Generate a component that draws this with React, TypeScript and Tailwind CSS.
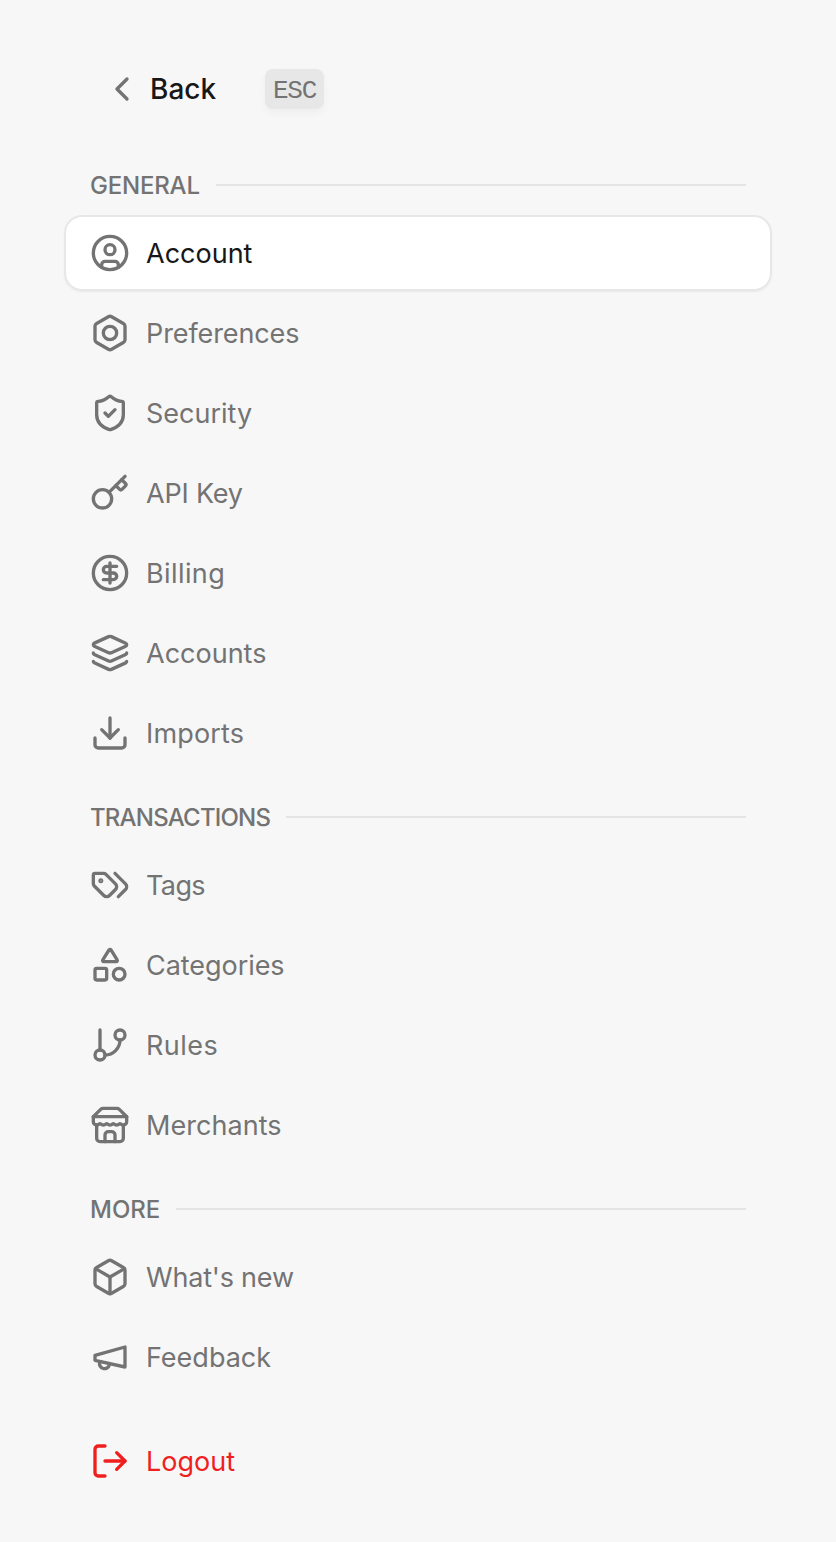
import type { ReactNode } from 'react'
import {
  Bolt,
  Box,
  ChevronLeft,
  CircleDollarSign,
  CircleUser,
  Download,
  GitBranch,
  Key,
  Layers,
  LogOut,
  Shapes,
  ShieldCheck,
} from 'lucide-react'

type NavItem = {
  name: string
  icon: ReactNode
  tracking?: string
  active?: boolean
}

type NavSection = {
  header: string
  tracking?: string
  items: NavItem[]
}

// Outline icons that lucide-react has redrawn or that need their own paths
function OutlineIcon({ children }: { children: ReactNode }) {
  return (
    <svg width="40" height="40" viewBox="0 0 24 24" fill="none" stroke="currentColor" strokeWidth="2" strokeLinecap="round" strokeLinejoin="round">
      {children}
    </svg>
  )
}

function StoreIcon() {
  return (
    <OutlineIcon>
      <path d="m2 7 4.41-4.41A2 2 0 0 1 7.83 2h8.34a2 2 0 0 1 1.42.59L22 7" />
      <path d="M4 12v8a2 2 0 0 0 2 2h12a2 2 0 0 0 2-2v-8" />
      <path d="M15 22v-4a2 2 0 0 0-2-2h-2a2 2 0 0 0-2 2v4" />
      <path d="M2 7h20" />
      <path d="M22 7v3a2 2 0 0 1-2 2a2.7 2.7 0 0 1-1.59-.63.7.7 0 0 0-.82 0A2.7 2.7 0 0 1 16 12a2.7 2.7 0 0 1-1.59-.63.7.7 0 0 0-.82 0A2.7 2.7 0 0 1 12 12a2.7 2.7 0 0 1-1.59-.63.7.7 0 0 0-.82 0A2.7 2.7 0 0 1 8 12a2.7 2.7 0 0 1-1.59-.63.7.7 0 0 0-.82 0A2.7 2.7 0 0 1 4 12a2 2 0 0 1-2-2V7" />
    </OutlineIcon>
  )
}

function MegaphoneIcon() {
  return (
    <OutlineIcon>
      <path d="m3 11 18-5v12L3 14v-3z" />
      <path d="M11.6 16.8a3 3 0 1 1-5.8-1.6" />
    </OutlineIcon>
  )
}

function TagsIcon() {
  return (
    <OutlineIcon>
      <path d="m15 5 6.3 6.3a2.4 2.4 0 0 1 0 3.4L17 19" />
      <path d="M9.586 5.586A2 2 0 0 0 8.172 5H3a1 1 0 0 0-1 1v5.172a2 2 0 0 0 .586 1.414L8.29 18.29a2.426 2.426 0 0 0 3.42 0l3.58-3.58a2.426 2.426 0 0 0 0-3.42z" />
      <circle cx="6.5" cy="9.5" r=".5" fill="currentColor" />
    </OutlineIcon>
  )
}

const sections: NavSection[] = [
  {
    header: 'General',
    tracking: 'tracking-[-0.2px]',
    items: [
      { name: 'Account', icon: <CircleUser size={40} />, active: true },
      { name: 'Preferences', icon: <Bolt size={40} />, tracking: 'tracking-[-0.1px]' },
      { name: 'Security', icon: <ShieldCheck size={40} /> },
      { name: 'API Key', icon: <Key size={40} />, tracking: 'tracking-[-0.2px]' },
      { name: 'Billing', icon: <CircleDollarSign size={40} />, tracking: 'tracking-[0.4px]' },
      { name: 'Accounts', icon: <Layers size={40} /> },
      { name: 'Imports', icon: <Download size={40} />, tracking: 'tracking-[0.15px]' },
    ],
  },
  {
    header: 'Transactions',
    tracking: 'tracking-[-0.8px]',
    items: [
      { name: 'Tags', icon: <TagsIcon />, tracking: 'tracking-[-0.6px]' },
      { name: 'Categories', icon: <Shapes size={40} />, tracking: 'tracking-[-0.05px]' },
      { name: 'Rules', icon: <GitBranch size={40} />, tracking: 'tracking-[0.45px]' },
      { name: 'Merchants', icon: <StoreIcon />, tracking: 'tracking-[0.05px]' },
    ],
  },
  {
    header: 'More',
    items: [
      { name: "What's new", icon: <Box size={40} />, tracking: 'tracking-[-0.2px]' },
      { name: 'Feedback', icon: <MegaphoneIcon /> },
    ],
  },
]

function NavRow({ item }: { item: NavItem }) {
  return (
    <li>
      <a
        href="#"
        className={`flex h-[76px] items-center gap-4 rounded-[18px] px-[26px] ${
          item.active ? 'bg-white shadow-[inset_0_0_0_2px_#e7e7e7,0_1px_2px_rgba(0,0,0,0.06)]' : ''
        }`}
      >
        {item.icon}
        <span className={`pt-0.5 ${item.tracking ?? ''} ${item.active ? 'text-[#171717]' : ''}`}>{item.name}</span>
      </a>
    </li>
  )
}

export default function App() {
  return (
    <nav className="min-h-[1542px] bg-[#f7f7f7] px-16 pt-[68px] font-['Inter','Liberation_Sans',sans-serif] text-[27px] leading-10 text-[#737373]">
      <div className="flex h-[42px] items-center pl-[38px]">
        <ChevronLeft size={40} />
        <span className="ml-2 w-[67px] text-[28px] font-medium text-[#171717]">Back</span>
        <kbd className="ml-12 flex h-10 w-[59px] items-center justify-center rounded-lg bg-[#e7e7e7] pt-1 font-['Liberation_Mono',monospace] text-[26px] tracking-[-1.3px] shadow-[0_4px_8px_rgba(0,0,0,0.04)]">
          ESC
        </kbd>
      </div>

      <div className="mt-[59px] flex flex-col gap-[30px]">
        {sections.map(section => (
          <section key={section.header}>
            <div className="flex h-8 items-center gap-4 px-[26px]">
              <h3 className={`pt-px text-[24px] font-medium uppercase ${section.tracking ?? ''}`}>{section.header}</h3>
              <div className="h-0.5 flex-1 bg-[#e5e5e5]" />
            </div>
            <ul className="mt-3.5 flex flex-col gap-1">
              {section.items.map(item => (
                <NavRow key={item.name} item={item} />
              ))}
            </ul>
          </section>
        ))}
      </div>

      <button className="mt-7 flex h-[76px] items-center gap-4 px-[26px] text-[#f01f1f]">
        <LogOut size={40} />
        <span className="pt-0.5">Logout</span>
      </button>
    </nav>
  )
}
